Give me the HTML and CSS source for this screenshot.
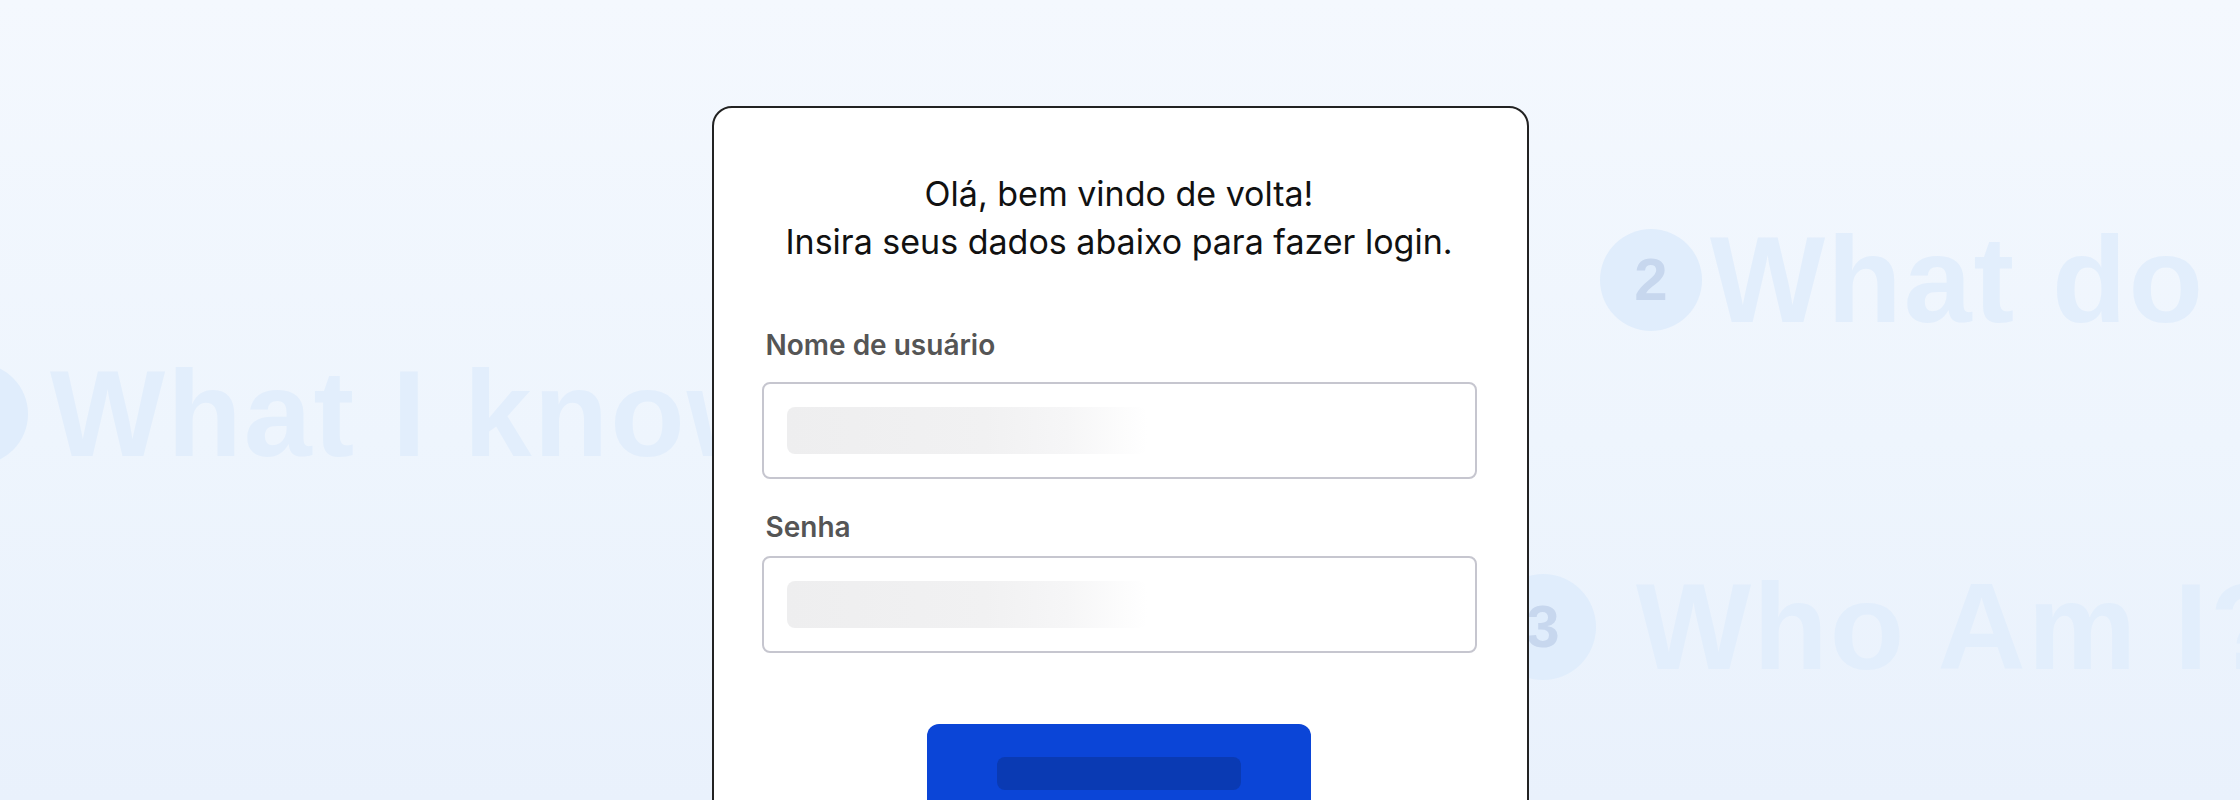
FILE: index.html
```html
<!DOCTYPE html>
<html lang="pt-BR">

<head>
  <meta charset="utf-8">
  <title>Login</title>
  <link rel="stylesheet" href="styles.css">
</head>

<body>
  <!-- page behind the modal -->
  <div class="page">
    <div class="step step-two">
      <span class="step-num">2</span>
      <span class="step-title">What do</span>
    </div>
    <div class="step step-one">
      <span class="step-num">1</span>
      <span class="step-title">What I know</span>
    </div>
    <div class="step step-three">
      <span class="step-num">3</span>
      <span class="step-title">Who Am I?</span>
    </div>
  </div>

  <div class="overlay">
    <main class="login-card">
      <p class="greeting">
        Olá, bem vindo de volta!<br>
        Insira seus dados abaixo para fazer login.
      </p>

      <form class="login-form">
        <div class="field field-user">
          <label class="field-label">Nome de usuário</label>
          <div class="field-input"><span class="skeleton"></span></div>
        </div>

        <div class="field field-pass">
          <label class="field-label">Senha</label>
          <div class="field-input"><span class="skeleton"></span></div>
        </div>

        <div class="actions">
          <button type="button" class="primary-btn" aria-label="Entrar">
            <span class="skeleton-btn"></span>
          </button>
        </div>
      </form>
    </main>
  </div>
</body>

</html>
```

FILE: styles.css
```css
html,
body {
  height: 100%;
  margin: 0;
  padding: 0;
}

body {
  overflow: hidden;
  font-family: Inter, "Noto Sans", sans-serif;
  background: linear-gradient(180deg, #f4f8fe 0%, #eef5fd 55%, #e9f1fc 100%);
}

/* faded page behind the modal */
.page {
  padding-top: 220px;
  display: flex;
  flex-direction: column;
  overflow: hidden;
}

.step {
  display: flex;
  align-items: center;
  gap: 8px;
  height: 120px;
  white-space: nowrap;
}

.step-num {
  flex: none;
  width: 102px;
  height: 102px;
  border-radius: 50%;
  background-color: #e0edfc;
  color: #c7d7ee;
  font: 700 60px/1 "Liberation Sans", Arial, sans-serif;
  display: flex;
  align-items: center;
  justify-content: center;
}

.step-title {
  font: 700 122px/120px "Liberation Sans", Arial, sans-serif;
  letter-spacing: 2px;
  color: #e2eefc;
}

.step-two {
  margin-left: 1600px;
}

.step-one {
  margin-top: 14px;
  margin-left: -74px;
  gap: 22px;
}

.step-three {
  margin-top: 93px;
  margin-left: 1490px;
  gap: 40px;
}

.step-three .step-num {
  width: 106px;
  height: 106px;
}

/* modal */
.overlay {
  position: fixed;
  inset: 0;
  display: flex;
  justify-content: center;
  align-items: flex-start;
  padding-top: 106px;
}

.login-card {
  width: 817px;
  box-sizing: border-box;
  padding: 62px 50px 60px 48px;
  background-color: white;
  border: 2px solid #222;
  border-radius: 20px;
}

.greeting {
  margin: 0;
  text-align: center;
  font-size: 34px;
  line-height: 48px;
  color: #111;
}

.login-form {
  margin-top: 64px;
  display: flex;
  flex-direction: column;
}

.field {
  display: flex;
  flex-direction: column;
}

.field-label {
  font-size: 28px;
  line-height: 30px;
  font-weight: 600;
  color: #555;
  padding-left: 4px;
}

.field-user .field-label {
  margin-bottom: 22px;
}

.field-pass {
  margin-top: 33px;
}

.field-pass .field-label {
  margin-bottom: 14px;
}

.field-input {
  height: 97px;
  box-sizing: border-box;
  padding: 23px;
  border: 2px solid #c6c6cf;
  border-radius: 8px;
  background-color: white;
}

.skeleton {
  display: block;
  width: 360px;
  height: 47px;
  border-radius: 8px;
  background: linear-gradient(90deg, #eeeeef 0%, #f1f1f2 55%, #f6f6f7 78%, #fff 100%);
}

.actions {
  margin-top: 71px;
  display: flex;
  justify-content: center;
}

.primary-btn {
  width: 384px;
  height: 98px;
  display: flex;
  align-items: center;
  justify-content: center;
  border: none;
  border-radius: 12px;
  background-color: #0b45d7;
  cursor: pointer;
}

.skeleton-btn {
  display: block;
  width: 244px;
  height: 33px;
  border-radius: 8px;
  background-color: #0a3ab3;
}
```
